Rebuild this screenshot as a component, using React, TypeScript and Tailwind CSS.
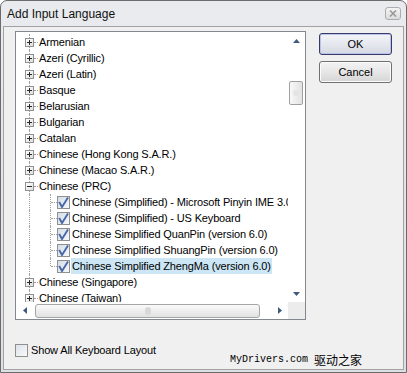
import React from "react";

type Row =
  | { kind: "root"; label: string; open?: boolean }
  | { kind: "child"; label: string; last?: boolean; selected?: boolean };

const rows: Row[] = [
  { kind: "root", label: "Armenian" },
  { kind: "root", label: "Azeri (Cyrillic)" },
  { kind: "root", label: "Azeri (Latin)" },
  { kind: "root", label: "Basque" },
  { kind: "root", label: "Belarusian" },
  { kind: "root", label: "Bulgarian" },
  { kind: "root", label: "Catalan" },
  { kind: "root", label: "Chinese (Hong Kong S.A.R.)" },
  { kind: "root", label: "Chinese (Macao S.A.R.)" },
  { kind: "root", label: "Chinese (PRC)", open: true },
  { kind: "child", label: "Chinese (Simplified) - Microsoft Pinyin IME 3.0" },
  { kind: "child", label: "Chinese (Simplified) - US Keyboard" },
  { kind: "child", label: "Chinese Simplified QuanPin (version 6.0)" },
  { kind: "child", label: "Chinese Simplified ShuangPin (version 6.0)" },
  { kind: "child", label: "Chinese Simplified ZhengMa (version 6.0)", last: true, selected: true },
  { kind: "root", label: "Chinese (Singapore)" },
  { kind: "root", label: "Chinese (Taiwan)" },
];

const Expander = ({ open }: { open?: boolean }) => (
  <div className="absolute left-[9px] top-[4px] w-[9px] h-[9px] border border-[#919191] bg-gradient-to-br from-white to-[#dedede] flex items-center justify-center">
    <svg width="5" height="5" viewBox="0 0 5 5">
      <rect x="0" y="2" width="5" height="1" fill="#2a2a2a" />
      {!open && <rect x="2" y="0" width="1" height="5" fill="#2a2a2a" />}
    </svg>
  </div>
);

const Check = () => (
  <div className="absolute left-[41px] top-[2px] w-[13px] h-[13px] border border-[#8f8f8f] bg-gradient-to-br from-[#d6dde6] to-[#f6f8fa] flex items-center justify-center">
    <svg width="11" height="11" viewBox="0 0 11 11">
      <path d="M1.2 5 L4 10 L10 0.5" fill="none" stroke="#4868a8" strokeWidth="1.9" />
    </svg>
  </div>
);

const TreeRow = ({ row }: { row: Row }) => {
  if (row.kind === "root") {
    return (
      <div className="h-4 flex items-center">
        <div className="relative w-[22px] h-full shrink-0">
          <div className="absolute left-[13px] top-0 bottom-0 border-l border-dotted border-[#a0a0a0]" />
          <div className="absolute left-[18px] top-[8px] w-[4px] border-t border-dotted border-[#a0a0a0]" />
          <Expander open={row.open} />
        </div>
        <span className="px-[1px] leading-4 whitespace-nowrap tracking-[-0.15px]">{row.label}</span>
      </div>
    );
  }
  return (
    <div className="h-4 flex items-center">
      <div className="relative w-[55px] h-full shrink-0">
        <div className="absolute left-[13px] top-0 bottom-0 border-l border-dotted border-[#a0a0a0]" />
        <div
          className={
            row.last
              ? "absolute left-[34px] top-0 h-[8px] border-l border-dotted border-[#a0a0a0]"
              : "absolute left-[34px] top-0 bottom-0 border-l border-dotted border-[#a0a0a0]"
          }
        />
        <div className="absolute left-[35px] top-[8px] w-[6px] border-t border-dotted border-[#a0a0a0]" />
        <Check />
      </div>
      <span
        className={
          row.selected
            ? "px-[1px] leading-4 whitespace-nowrap tracking-[-0.15px] bg-[#cce6f5]"
            : "px-[1px] leading-4 whitespace-nowrap tracking-[-0.15px]"
        }
      >
        {row.label}
      </span>
    </div>
  );
};

const Arrow = ({ dir }: { dir: "up" | "down" | "left" | "right" }) => {
  const pts = {
    up: "0,4 3.5,0 7,4",
    down: "0,0 7,0 3.5,4",
    left: "4,0 4,7 0,3.5",
    right: "0,0 4,3.5 0,7",
  }[dir];
  const horiz = dir === "up" || dir === "down";
  return (
    <svg width={horiz ? 7 : 4} height={horiz ? 4 : 7} viewBox={horiz ? "0 0 7 4" : "0 0 4 7"}>
      <polygon points={pts} fill="#3f5a7e" />
    </svg>
  );
};

const Button = ({ label, primary }: { label: string; primary?: boolean }) => (
  <div
    className={
      primary
        ? "w-[73px] h-[22px] rounded-[3px] border border-[#3a3a6a] bg-gradient-to-b from-[#f4f4f8] via-[#e6e8ef] to-[#d6d8e2] flex items-center justify-center shadow-[inset_0_0_0_1px_#b9c3ea]"
        : "w-[73px] h-[22px] rounded-[3px] border border-[#707070] bg-gradient-to-b from-[#f3f3f3] via-[#e6e6e6] to-[#d5d5d5] flex items-center justify-center shadow-[inset_0_0_0_1px_#fbfbfb]"
    }
  >
    <span className="text-[11px] text-black">{label}</span>
  </div>
);

export default function App() {
  return (
    <div className="w-[407px] h-[373px] bg-white font-['Liberation_Sans',Arial,sans-serif] text-[11px] text-black">
      <div className="w-full h-full rounded-t-[7px] border border-[#6b6b6b] bg-gradient-to-b from-[#e9ebee] to-[#dcdfe3] flex flex-col px-[2px] pb-[2px]">
        <div className="h-[25px] flex items-center justify-between pl-[4px] pr-[3px]">
          <span className="text-[12px] text-[#111] leading-none">Add Input Language</span>
          <div className="w-[16px] h-[13px] rounded-[3px] border border-[#a9acb0] bg-gradient-to-b from-[#f4f4f4] to-[#dcdcdc] flex items-center justify-center">
            <svg width="8" height="7" viewBox="0 0 8 7">
              <path d="M1 0.5 L7 6.5 M7 0.5 L1 6.5" stroke="#9a9a9a" strokeWidth="1.6" />
            </svg>
          </div>
        </div>
        <div className="flex-1 border border-[#a2a2a2] bg-[#f0f0f0] relative flex flex-col pl-[11px] pt-[4px]">
          <div className="flex gap-[13px]">
            <div className="w-[291px] h-[289px] border border-[#828790] bg-white grid grid-cols-[1fr_17px] grid-rows-[1fr_17px]">
              <div className="overflow-hidden pt-[2px]">
                {rows.map((r, i) => (
                  <TreeRow key={i} row={r} />
                ))}
              </div>
              <div className="flex flex-col items-center bg-white">
                <div className="h-[17px] flex items-center justify-center">
                  <Arrow dir="up" />
                </div>
                <div className="flex-1 w-full px-[1px] pt-[32px]">
                  <div className="w-[14px] h-[24px] rounded-[2px] border border-[#a0a0a0] bg-gradient-to-r from-[#f8f8f8] to-[#e2e2e2] flex items-center justify-center">
                    <div className="w-[6px] h-[6px] rounded-full bg-[#e4e4e4]" />
                  </div>
                </div>
                <div className="h-[17px] flex items-center justify-center">
                  <Arrow dir="down" />
                </div>
              </div>
              <div className="flex items-center bg-white">
                <div className="w-[17px] h-full flex items-center justify-center">
                  <Arrow dir="left" />
                </div>
                <div className="w-[225px] h-[14px] ml-[2px] rounded-[3px] border border-[#a5a5a5] bg-gradient-to-b from-[#fafafa] to-[#e1e1e1] flex items-center justify-center">
                  <div className="w-[6px] h-[8px] rounded-full bg-[#d8d8d8]" />
                </div>
                <div className="flex-1" />
                <div className="w-[17px] h-full flex items-center justify-center">
                  <Arrow dir="right" />
                </div>
              </div>
              <div className="bg-[#ececec]" />
            </div>
            <div className="flex flex-col gap-[6px] pt-[2px]">
              <Button label="OK" primary />
              <Button label="Cancel" />
            </div>
          </div>
          <div className="mt-[22px] flex items-center gap-[3px]">
            <div className="w-[13px] h-[13px] border border-[#8e8f8f] bg-gradient-to-br from-[#dde3ea] to-[#f8f9fa]" />
            <span className="tracking-[-0.15px]">Show All Keyboard Layout</span>
          </div>
          <div className="absolute left-[226px] top-[327px] flex items-center text-[12px] leading-none text-black">
            <span className="font-['Liberation_Mono',monospace] text-[10px]">MyDrivers.com&nbsp;</span>
            <span className="font-['Noto_Sans_CJK_SC',sans-serif]">驱动之家</span>
          </div>
        </div>
      </div>
    </div>
  );
}
